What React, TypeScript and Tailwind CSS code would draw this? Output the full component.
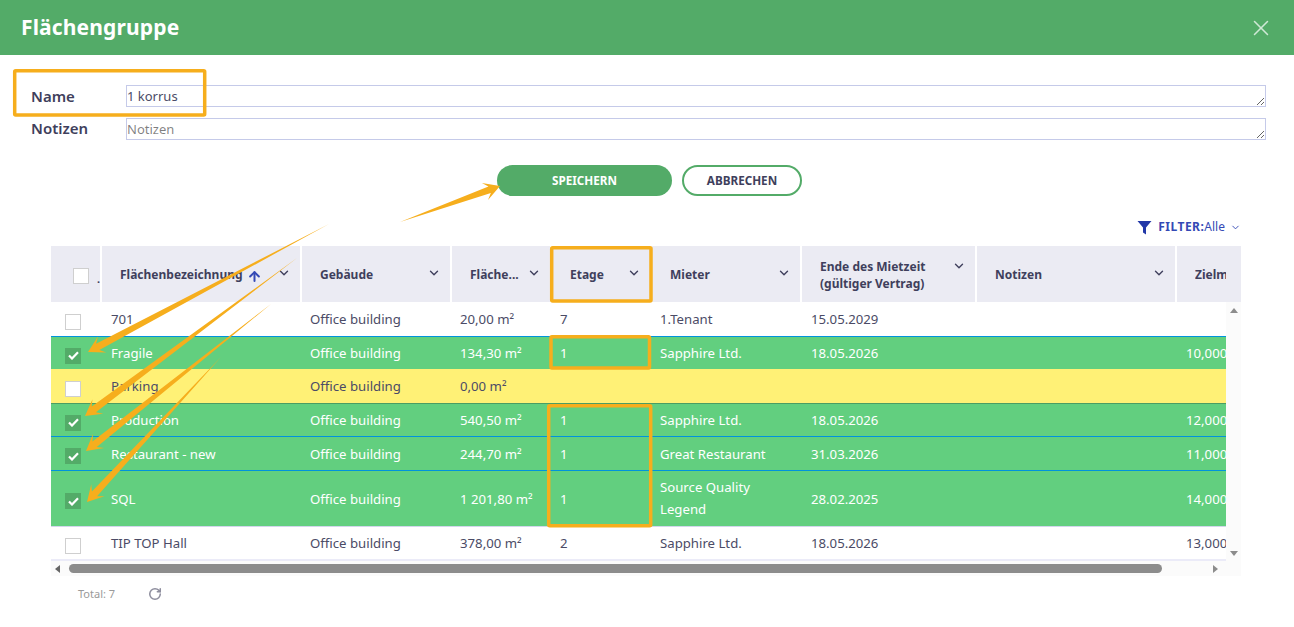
import { ArrowUp, ChevronDown, RotateCw, X } from "lucide-react";

const font = { fontFamily: '"Noto Sans", sans-serif' };

const columns = [
  { title: "Flächenbezeichnung", width: "w-[200px]" },
  { title: "Gebäude", width: "w-[150px]" },
  { title: "Fläche...", width: "w-[100px]" },
  { title: "Etage", width: "w-[100px]" },
  { title: "Mieter", width: "w-[150px]" },
  { title: "Ende des Mietzeit (gültiger Vertrag)", width: "w-[175px]" },
  { title: "Notizen", width: "w-[200px]" },
];

const rows = [
  { name: "701", size: "20,00 m²", floor: "7", tenant: "1.Tenant", end: "15.05.2029", goal: "", kind: "plain", h: "h-[34px]", border: "" },
  { name: "Fragile", size: "134,30 m²", floor: "1", tenant: "Sapphire Ltd.", end: "18.05.2026", goal: "10,000", kind: "green", h: "h-[33px]", border: "border-t border-[#0093dd]" },
  { name: "Parking", size: "0,00 m²", floor: "", tenant: "", end: "", goal: "", kind: "yellow", h: "h-[34px]", border: "" },
  { name: "Production", size: "540,50 m²", floor: "1", tenant: "Sapphire Ltd.", end: "18.05.2026", goal: "12,000", kind: "green", h: "h-[33px]", border: "border-t border-[#4b9d63]" },
  { name: "Restaurant - new", size: "244,70 m²", floor: "1", tenant: "Great Restaurant", end: "31.03.2026", goal: "11,000", kind: "green", h: "h-[34px]", border: "border-t border-[#0093dd]" },
  { name: "SQL", size: "1 201,80 m²", floor: "1", tenant: "Source Quality Legend", end: "28.02.2025", goal: "14,000", kind: "green", h: "h-[56px]", border: "border-t border-[#0093dd]" },
  { name: "TIP TOP Hall", size: "378,00 m²", floor: "2", tenant: "Sapphire Ltd.", end: "18.05.2026", goal: "13,000", kind: "plain", h: "h-[33px]", border: "border-t border-[#d3d6ec]" },
];

const rowStyle: Record<string, string> = {
  plain: "bg-white text-[#4b4b66]",
  green: "bg-[#62cf7f] text-white",
  yellow: "bg-[#fff176] text-[#4b4b66]",
};

function Arrow({ x1, y1, x2, y2 }: { x1: number; y1: number; x2: number; y2: number }) {
  // tapered shaft, thin at the tail, with a swept head at the tip
  const len = Math.hypot(x2 - x1, y2 - y1);
  const ux = (x2 - x1) / len;
  const uy = (y2 - y1) / len;
  const nx = -uy;
  const ny = ux;
  const at = (back: number, side: number) =>
    `${x2 - ux * back + nx * side},${y2 - uy * back + ny * side}`;
  const pts = [
    `${x1},${y1}`,
    at(11, 3.5),
    at(16, 9),
    at(0, 0),
    at(16, -9),
    at(11, -3.5),
  ].join(" ");
  return <polygon points={pts} fill="#f6ae1d" />;
}

function Box({ x, y, w, h }: { x: number; y: number; w: number; h: number }) {
  return <rect x={x} y={y} width={w} height={h} rx="1" fill="none" stroke="#f6ae1d" strokeWidth="3.5" />;
}

function Check({ checked }: { checked?: boolean }) {
  return (
    <div
      className={`flex h-4 w-4 items-center justify-center border ${
        checked ? "border-[#53ab68] bg-[#53ab68]" : "border-[#cfcfcf] bg-white"
      }`}
    >
      {checked && (
        <svg width="11" height="9" viewBox="0 0 11 9" fill="none" stroke="white" strokeWidth="2.2">
          <path d="M1 4.5 L4 7.5 L10 1.2" />
        </svg>
      )}
    </div>
  );
}

function HeaderCell({ title, width }: { title: string; width: string }) {
  const twoLine = title.length > 20;
  return (
    <div className={`${width} relative flex h-full shrink-0 items-center border-r-2 border-white pl-[18px] pt-[2px]`}>
      <span className={`text-[12px] font-bold text-[#3f3f5c] ${twoLine ? "w-[125px] leading-[17px]" : ""}`}>{title}</span>
      {title === "Flächenbezeichnung" && (
        <ArrowUp size={15} strokeWidth={3.2} className="ml-[4px] mt-[2px] text-[#3449b5]" />
      )}
      <ChevronDown
        size={14}
        strokeWidth={2.4}
        className={`absolute right-[9px] text-[#3f3f5c] ${twoLine ? "top-[13px]" : "top-[20px]"}`}
      />
    </div>
  );
}

export default function App() {
  return (
    <div style={font} className="relative h-[627px] w-full overflow-hidden bg-white">
      <header className="flex h-[55px] items-center justify-between bg-[#53ab68] pl-[21px] pr-[20px]">
        <h1 className="text-[21px] font-bold tracking-[0.15px] text-white">Flächengruppe</h1>
        <X size={26} strokeWidth={1.4} className="text-[#cfe8d5]" />
      </header>

      <div className="flex flex-col gap-[11px] pl-[31px] pt-[30px]">
        <div className="flex h-[22px] items-center">
          <label className="w-[95px] text-[15px] font-semibold leading-[22px] text-[#3f3f5c]">Name</label>
          <textarea
            readOnly
            value="1 korrus"
            className="h-[22px] w-[1140px] border border-[#c5cae9] text-[13px] leading-[20px] text-[#4b4b66] outline-none"
          />
        </div>
        <div className="flex h-[22px] items-center">
          <label className="-mt-[2px] w-[95px] text-[15px] font-semibold leading-[22px] text-[#3f3f5c]">Notizen</label>
          <textarea
            readOnly
            placeholder="Notizen"
            className="h-[22px] w-[1140px] border border-[#c5cae9] text-[13px] leading-[20px] outline-none"
          />
        </div>
      </div>

      <div className="mt-[25px] flex justify-center gap-[10px] pl-[5px]">
        <button className="h-[31px] w-[175px] rounded-full bg-[#53ab68] text-[11.7px] font-bold text-white">SPEICHERN</button>
        <button className="h-[31px] w-[120px] rounded-full border-2 border-[#53ab68] bg-white text-[11.7px] font-bold text-[#3f3f5c]">
          ABBRECHEN
        </button>
      </div>

      <div className="mt-[21px] flex h-[20px] items-center justify-end pr-[53px] text-[12px] text-[#3449b5]">
        <svg width="15" height="15" viewBox="0 0 15 15" className="mr-[6px]" fill="#2238a8">
          <path d="M0.5 1 H14.5 L9 7.5 V14.5 L6 12.5 V7.5 Z" />
        </svg>
        <span className="font-bold tracking-[0.5px]">FILTER:</span>
        <span>Alle</span>
        <ChevronDown size={11} strokeWidth={2} className="ml-[5px]" />
      </div>

      <div className="ml-[51px] mt-[9px] w-[1190px]">
        <div className="flex h-[56px] overflow-hidden bg-[#ebebf3]">
          <div className="relative flex h-full w-[51px] shrink-0 items-center border-r-2 border-white pl-[22px]">
            <div className="mt-[4px]">
              <Check />
            </div>
            <span className="absolute left-[46px] top-[27px] text-[11px] font-bold leading-none text-[#3f3f5c]">.</span>
          </div>
          {columns.map((c) => (
            <HeaderCell key={c.title} title={c.title} width={c.width} />
          ))}
          <div className="flex h-full w-[64px] shrink-0 items-center pl-[18px] pt-[2px]">
            <span className="w-[31px] overflow-hidden text-[12px] font-bold text-[#3f3f5c]">Zielmiete</span>
          </div>
        </div>

        <div className="flex">
          <div className="w-[1175px] overflow-hidden">
            {rows.map((r) => (
              <div key={r.name} className={`flex items-center pt-[2px] text-[13.2px] ${r.h} ${r.border} ${rowStyle[r.kind]}`}>
                <div className="w-[51px] shrink-0 pl-[14px] pt-[3px]">
                  <Check checked={r.kind === "green"} />
                </div>
                <div className="w-[200px] shrink-0 pl-[9px]">{r.name}</div>
                <div className="w-[150px] shrink-0 pl-[8px]">Office building</div>
                <div className="w-[100px] shrink-0 pl-[8px]">{r.size}</div>
                <div className="w-[100px] shrink-0 pl-[8px]">{r.floor}</div>
                <div className="w-[150px] shrink-0 pl-[8px] pr-[30px]">
                  <div className={r.name === "SQL" ? "-mt-[4px] leading-[22px]" : ""}>{r.tenant}</div>
                </div>
                <div className="w-[175px] shrink-0 pl-[9px]">{r.end}</div>
                <div className="w-[200px] shrink-0" />
                <div className="w-[49px] shrink-0 overflow-hidden pl-[9px]">{r.goal}</div>
              </div>
            ))}
            <div className="h-[2px] bg-[#ebebf8]" />
            <div className="flex h-[15px] items-center bg-[#fbfbfb]">
              <div className="ml-[4px] h-0 w-0 border-y-[4px] border-r-[5px] border-y-transparent border-r-[#666]" />
              <div className="ml-[9px] h-[9px] w-[1093px] rounded-full bg-[#8c8c8c]" />
              <div className="ml-[51px] h-0 w-0 border-y-[4px] border-l-[5px] border-y-transparent border-l-[#8c8c8c]" />
            </div>
          </div>
          <div className="flex w-[15px] flex-col items-center justify-between bg-[#fbfbfb] pb-[20px] pt-[6px]">
            <div className="h-0 w-0 border-x-[4px] border-b-[5px] border-x-transparent border-b-[#8c8c8c]" />
            <div className="h-0 w-0 border-x-[4px] border-t-[5px] border-x-transparent border-t-[#8c8c8c]" />
          </div>
        </div>
      </div>

      <div className="ml-[78px] mt-[9px] flex h-[18px] items-center text-[11px] text-[#9a9a9a]">
        <span className="w-[70px]">Total: 7</span>
        <RotateCw size={14} strokeWidth={2.6} className="text-[#8e8e9e]" />
      </div>

      <svg className="pointer-events-none absolute inset-0" width="1294" height="627">
        <Box x={14.7} y={70.7} w={190} h={44.3} />
        <Box x={551.7} y={247.7} w={99.3} h={53.3} />
        <Box x={551} y={336.7} w={98.5} h={31.3} />
        <Box x={548.7} y={405.7} w={102} h={120} />
        <Arrow x1={400} y1={222} x2={500} y2={186} />
        <Arrow x1={329} y1={224} x2={88} y2={352} />
        <Arrow x1={297} y1={258} x2={85} y2={416} />
        <Arrow x1={271} y1={304} x2={86} y2={451} />
        <Arrow x1={221} y1={357} x2={87} y2={502} />
      </svg>
    </div>
  );
}
